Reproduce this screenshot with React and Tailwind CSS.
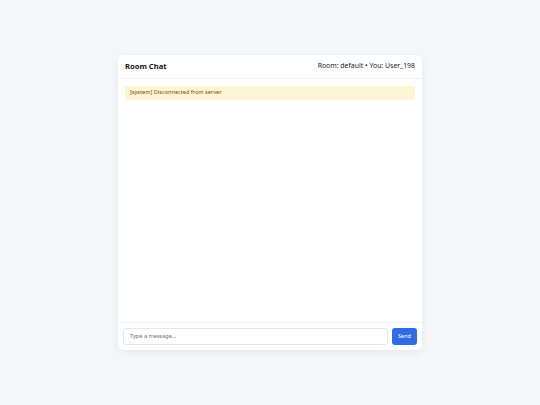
export default function App() {
  return (
    <div
      className="min-h-screen w-full flex items-center justify-center bg-[#f5f6fa]"
      style={{ fontFamily: '"Noto Sans", "Open Sans", sans-serif' }}
    >
      <div className="w-[304px] h-[295px] bg-white rounded-[6px] shadow-[0_2px_8px_rgba(15,23,42,0.06)] flex flex-col overflow-hidden">
        <div className="h-[24px] px-[7px] flex items-center justify-between border-b border-[#eef0f4] shrink-0">
          <div className="text-[7.6px] font-bold text-[#111111] leading-none">Room Chat</div>
          <div className="text-[6.9px] text-[#222222] leading-none">Room: default • You: User_198</div>
        </div>
        <div className="flex-1 p-[7px] flex flex-col">
          <div className="h-[14px] rounded-[3px] bg-[#fef5d4] px-[5px] flex items-center text-[5.6px] text-[#7a4a14] leading-none">
            [system] Disconnected from server
          </div>
        </div>
        <div className="border-t border-[#eef0f4] pt-[5px] pb-[5px] px-[5px] flex gap-[4px] shrink-0">
          <div className="flex-1 h-[17px] border border-[#e3e6ea] rounded-[3px] px-[6px] flex items-center text-[5.6px] text-[#6b7078] leading-none">
            Type a message...
          </div>
          <div className="w-[25px] h-[17px] rounded-[3px] bg-[#2f6be3] text-white text-[5.6px] flex items-center justify-center leading-none">
            Send
          </div>
        </div>
      </div>
    </div>
  );
}
